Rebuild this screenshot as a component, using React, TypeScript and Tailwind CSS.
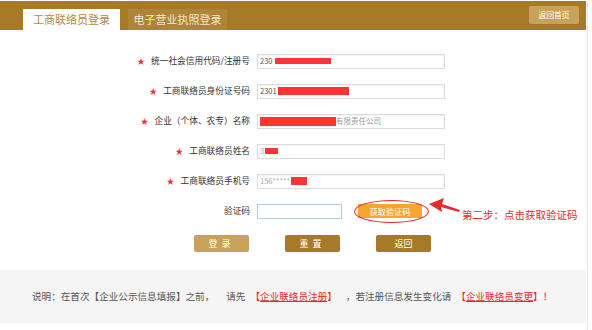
import React from "react";

const font = { fontFamily: '"Noto Sans CJK SC", "Noto Sans", sans-serif' };

function Row({
  label,
  star = true,
  children,
}: {
  label: string;
  star?: boolean;
  children: React.ReactNode;
}) {
  return (
    <div className="flex h-[30px] items-center">
      <div className="flex w-[250px] items-center justify-end text-[8.7px] text-[#333]">
        {star && <span className="mr-[6px] text-[8px] leading-none text-[#e33]">★</span>}
        <span>{label}</span>
      </div>
      {children}
    </div>
  );
}

function Field({ children }: { children?: React.ReactNode }) {
  return (
    <div className="ml-[7px] flex h-[15px] w-[188px] items-center overflow-hidden border border-[#dcdcdc] bg-white pl-[2px] text-[7.5px] text-[#888] shadow-[inset_0_1px_1px_rgba(0,0,0,0.05)]">
      {children}
    </div>
  );
}

const Red = ({ w, h }: { w: number; h: number }) => (
  <span className="inline-block bg-[#ff3535]" style={{ width: w, height: h }} />
);

export default function App() {
  return (
    <div className="relative h-[330px] w-[588px] border-r border-[#e6e6e6] bg-white" style={font}>
      {/* header */}
      <div className="mt-[1px] flex h-[29px] w-[586px] items-end bg-[#a67a27] pl-[23px]">
        <div className="flex h-[21px] w-[97px] items-center justify-center bg-white text-[11px] text-[#b08a45]">
          工商联络员登录
        </div>
        <div className="ml-[8px] flex h-[21px] w-[99px] items-center justify-center bg-[#ad843a] text-[11px] text-[#f3e6cc]">
          电子营业执照登录
        </div>
        <div className="mb-[6px] ml-auto mr-[7px] flex h-[18px] w-[50px] items-center justify-center self-start mt-[5px] rounded-[2px] bg-[#c9a259] text-[7.8px] text-white">
          返回首页
        </div>
      </div>

      {/* form */}
      <div className="pt-[16px]">
        <Row label="统一社会信用代码/注册号">
          <Field>
            <span className="mr-[2px] text-[#555]">230</span>
            <Red w={56} h={6} />
          </Field>
        </Row>
        <Row label="工商联络员身份证号码">
          <Field>
            <span className="mr-[1px] text-[#555]">2301</span>
            <Red w={71} h={8} />
          </Field>
        </Row>
        <Row label="企业（个体、农专）名称">
          <Field>
            <Red w={76} h={9} />
            <span className="text-[#999]">有限责任公司</span>
          </Field>
        </Row>
        <Row label="工商联络员姓名">
          <Field>
            <span className="mr-[1px] text-[#aaa]">3</span>
            <Red w={13} h={6} />
          </Field>
        </Row>
        <Row label="工商联络员手机号">
          <Field>
            <span className="mr-[1px] text-[#aaa]">156*****</span>
            <Red w={16} h={8} />
          </Field>
        </Row>
        <div className="relative flex h-[30px] items-center">
          <div className="flex w-[250px] items-center justify-end text-[8.7px] text-[#333]">
            验证码
          </div>
          <div className="ml-[7px] h-[15px] w-[85px] border border-[#b3cde6] bg-white" />
          <div className="relative ml-[16px] flex h-[14px] w-[64px] items-center justify-center bg-[#f6a630] text-[8.2px] text-white">
            获取验证码
            <div className="absolute left-[-4px] top-[-4px] h-[23px] w-[75px] rounded-[50%] border-[1.5px] border-[#e8282b]" />
          </div>
          <svg className="absolute left-[428px] top-[0px]" width="36" height="24" viewBox="0 0 36 24">
            <polygon points="1,8 16,2 14,8 32,14 31,16 13,11 14,16" fill="#e8282b" />
          </svg>
          <div className="absolute left-[462px] top-[14px] text-[10.5px] leading-none text-[#e8282b]">
            第二步：点击获取验证码
          </div>
        </div>
      </div>

      {/* buttons */}
      <div className="mt-[9px] flex gap-[36px] pl-[194px]">
        <div className="flex h-[17px] w-[55px] items-center justify-center rounded-[2px] bg-[#c9a259] text-[9px] tracking-[4px] text-white">
          登录
        </div>
        <div className="flex h-[17px] w-[55px] items-center justify-center rounded-[2px] bg-[#a67a27] text-[9px] tracking-[4px] text-white">
          重置
        </div>
        <div className="flex h-[17px] w-[55px] items-center justify-center rounded-[2px] bg-[#a67a27] text-[9px] text-white">
          返回
        </div>
      </div>

      {/* note */}
      <div className="mt-[18px] flex h-[53px] w-[586px] items-center bg-[#f5f5f5] pl-[32px] text-[9.6px] text-[#555]">
        <span>说明：在首次【企业公示信息填报】之前，</span>
        <span className="ml-[12px]">请先</span>
        <span className="ml-[5px] text-[#e8282b]">
          【<span className="underline">企业联络员注册</span>】
        </span>
        <span className="ml-[9px]">，若注册信息发生变化请</span>
        <span className="ml-[5px] text-[#e8282b]">
          【<span className="underline">企业联络员变更</span>】！
        </span>
      </div>
    </div>
  );
}
